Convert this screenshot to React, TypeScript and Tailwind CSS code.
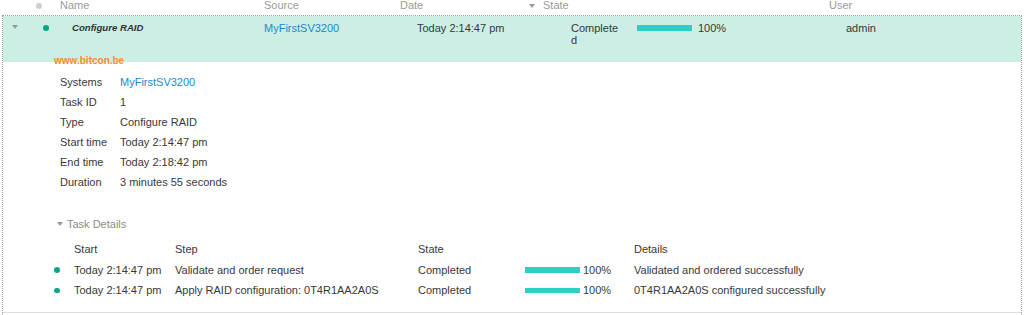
const Caret = ({ color = "border-t-[#9a9a9a]" }: { color?: string }) => (
  <span className={`block w-0 h-0 border-x-[3px] border-x-transparent border-t-[4.5px] ${color}`} />
);

const Dot = ({ className = "bg-[#01a982]" }: { className?: string }) => (
  <span className={`block w-[5.5px] h-[5.5px] rounded-full ${className}`} />
);

const Bar = () => <span className="block w-[55px] h-[5.5px] bg-[#2ccfc6]" />;

const details: [string, string, boolean?][] = [
  ["Systems", "MyFirstSV3200", true],
  ["Task ID", "1"],
  ["Type", "Configure RAID"],
  ["Start time", "Today 2:14:47 pm"],
  ["End time", "Today 2:18:42 pm"],
  ["Duration", "3 minutes 55 seconds"],
];

const steps = [
  {
    start: "Today 2:14:47 pm",
    step: "Validate and order request",
    state: "Completed",
    details: "Validated and ordered successfully",
  },
  {
    start: "Today 2:14:47 pm",
    step: "Apply RAID configuration: 0T4R1AA2A0S",
    state: "Completed",
    details: "0T4R1AA2A0S configured successfully",
  },
];

export default function App() {
  return (
    <div className="w-[1024px] h-[315px] overflow-hidden bg-white font-['Liberation_Sans',Arial,sans-serif] text-[11px] text-[#383838]">
      {/* Column header */}
      <div className="flex items-start h-[15px] pl-[36px] leading-[11px] text-[#9a9a9a]">
        <Dot className="bg-[#cfcfcf] mt-[3px]" />
        <div className="ml-[18.5px] w-[204px]">Name</div>
        <div className="w-[136px]">Source</div>
        <div className="w-[129px]">Date</div>
        <div className="w-[14px] pt-[4px]">
          <Caret />
        </div>
        <div className="w-[286px]">State</div>
        <div>User</div>
      </div>

      <div className="relative ml-[2px] w-[1020px] h-[300px] border-t border-x border-dotted border-[#9c9c9c]">
        {/* Selected row */}
        <div className="flex items-start h-[46px] bg-[#cbeee5] pt-[6px] pl-[9px] leading-[12px]">
          <div className="w-[6px] mt-[3px]">
            <Caret />
          </div>
          <div className="ml-[25px] w-[5.5px] mt-[3px]">
            <Dot />
          </div>
          <div className="ml-[23.5px] w-[192px] font-bold italic text-[9.6px] text-[#333]">Configure RAID</div>
          <div className="w-[153px] text-[#1e88c8]">MyFirstSV3200</div>
          <div className="w-[154px]">Today 2:14:47 pm</div>
          <div className="w-[50px] break-all">Completed</div>
          <div className="ml-[16px] mt-[3px]">
            <Bar />
          </div>
          <div className="ml-[6px] w-[148px]">100%</div>
          <div>admin</div>
        </div>

        {/* Watermark */}
        <div className="absolute left-[51px] top-[39.5px] text-[10px] leading-[10px] font-bold text-[#ff8a2e]">
          www.bitcon.be
        </div>

        {/* Task summary */}
        <div className="pt-[10px] pl-[57px]">
          {details.map(([label, value, link]) => (
            <div key={label} className="flex items-center h-[20px]">
              <div className="w-[60px]">{label}</div>
              <div className={link ? "text-[#1e88c8]" : ""}>{value}</div>
            </div>
          ))}
        </div>

        {/* Task details */}
        <div className="mt-[22px] flex items-center h-[20px] pl-[54px] text-[#8a8a8a]">
          <div className="w-[10px]">
            <Caret />
          </div>
          <div>Task Details</div>
        </div>

        <div className="mt-[5px] pb-[11px] border-b border-[#dcdcdc]">
          <div className="flex items-center h-[20.5px] pl-[51px]">
            <div className="w-[5.5px]" />
            <div className="ml-[14.5px] w-[101px]">Start</div>
            <div className="w-[243px]">Step</div>
            <div className="w-[216px]">State</div>
            <div>Details</div>
          </div>
          {steps.map((s, i) => (
            <div key={i} className="flex items-center h-[20.5px] pl-[51px]">
              <Dot />
              <div className="ml-[14.5px] w-[101px]">{s.start}</div>
              <div className="w-[243px]">{s.step}</div>
              <div className="w-[107px]">{s.state}</div>
              <Bar />
              <div className="ml-[3px] w-[51px]">100%</div>
              <div>{s.details}</div>
            </div>
          ))}
        </div>
      </div>
    </div>
  );
}
